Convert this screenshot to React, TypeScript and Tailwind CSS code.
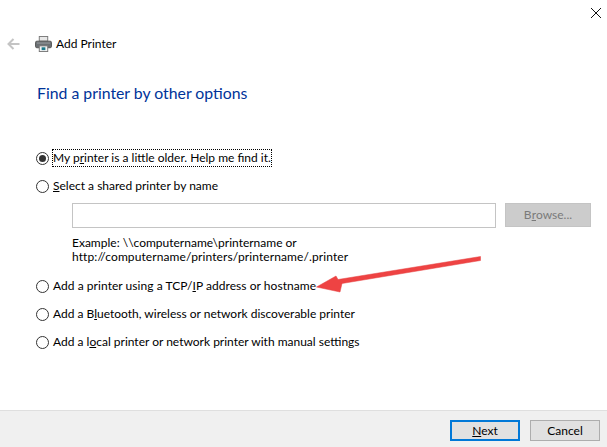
import React from 'react';

const Radio = ({ checked = false }: { checked?: boolean }) => (
  <span className="flex h-[13px] w-[13px] shrink-0 items-center justify-center rounded-full border border-[#333333] bg-white">
    {checked && <span className="h-[7px] w-[7px] rounded-full bg-[#333333]" />}
  </span>
);

const Option = ({ children, checked, className = '' }: { children: React.ReactNode; checked?: boolean; className?: string }) => (
  <div className={`flex h-[16px] items-center gap-[4px] ${className}`}>
    <Radio checked={checked} />
    {children}
  </div>
);

const PrinterIcon = () => (
  <svg width="17" height="16" viewBox="0 0 18 17">
    <rect x="4.5" y="0.5" width="9" height="5" fill="#e8e8e8" stroke="#777777" />
    <rect x="0.5" y="5.5" width="17" height="7" rx="1.5" fill="#6b6f73" stroke="#555555" />
    <rect x="2" y="7" width="14" height="1" fill="#9a9ea2" />
    <rect x="4.5" y="10.5" width="9" height="6" fill="#f4f4f4" stroke="#777777" />
    <rect x="7" y="12" width="4" height="3" fill="#1d7a8c" />
  </svg>
);

export default function App() {
  return (
    <div className="relative flex h-[447px] w-[607px] flex-col overflow-hidden bg-white font-['Lato',sans-serif] text-[12px] leading-[16px] text-black">
      {/* Title bar */}
      <div className="flex h-[26px] justify-end pr-[6px] pt-[7px]">
        <svg width="10" height="10" viewBox="0 0 10 10" className="mt-[1px]">
          <path d="M0 0L10 10M10 0L0 10" stroke="#111111" strokeWidth="1" fill="none" />
        </svg>
      </div>

      {/* Header */}
      <div className="flex h-[36px] items-center pl-[7px]">
        <svg width="13" height="12" viewBox="0 0 13 12">
          <path d="M12.5 6H2M6.5 1L1.5 6L6.5 11" stroke="#c4c4c4" strokeWidth="2" fill="none" />
        </svg>
        <span className="ml-[15px] flex"><PrinterIcon /></span>
        <span className="ml-[4px] text-[12px]">Add Printer</span>
      </div>

      <h1 className="ml-[37px] mt-[20px] text-[15.8px] font-normal leading-[22px] text-[#003399]">Find a printer by other options</h1>

      {/* Options */}
      <div className="ml-[36px] mt-[46px] flex flex-col">
        <Option checked>
          <span className="outline-1 outline-dotted outline-black">My p<u>r</u>inter is a little older. Help me find it.</span>
        </Option>
        <Option className="mt-[12px]">
          <span><u>S</u>elect a shared printer by name</span>
        </Option>

        <div className="ml-[36px] mt-[9px] flex items-start">
          <div className="h-[25px] w-[424px] border border-[#c4c4c4] bg-white" />
          <div className="ml-[9px] flex h-[24px] w-[86px] items-center justify-center border border-[#c4c4c4] bg-[#cccccc] text-[#7a7a7a]">
            B<u>r</u>owse...
          </div>
        </div>

        <p className="ml-[36px] mt-[8px] leading-[14px]">
          Example: \\computername\printername or
          <br />
          <span className="tracking-[0.1px]">http://computername/printers/printername/.printer</span>
        </p>

        <Option className="mt-[14px]">
          <span className="tracking-[0.05px]">Add a printer using a TCP/<u>I</u>P address or hostname</span>
        </Option>
        <Option className="mt-[12px]">
          <span>Add a B<u>l</u>uetooth, wireless or network discoverable printer</span>
        </Option>
        <Option className="mt-[12px]">
          <span>Add a l<u>o</u>cal printer or network printer with manual settings</span>
        </Option>
      </div>

      {/* Footer */}
      <div className="mt-auto box-content flex h-[21px] justify-end gap-[10px] border-t border-[#dfdfdf] bg-[#f0f0f0] pb-[6px] pr-[7px] pt-[9px]">
        <div className="flex h-[21px] w-[70px] items-center justify-center border-2 border-[#0078d7] bg-[#e1e1e1]">
          <span><u>N</u>ext</span>
        </div>
        <div className="flex h-[21px] w-[70px] items-center justify-center border border-[#adadad] bg-[#e1e1e1]">Cancel</div>
      </div>

      {/* Red annotation arrow */}
      <svg className="absolute left-0 top-0" width="607" height="447" viewBox="0 0 607 447">
        <path d="M480.5 256.5L480.5 260.5L342 283.5L340 292L316.5 287L336 276L338 279.5Z" fill="#ee4343" stroke="#e54040" strokeWidth="0.5" />
      </svg>
    </div>
  );
}
